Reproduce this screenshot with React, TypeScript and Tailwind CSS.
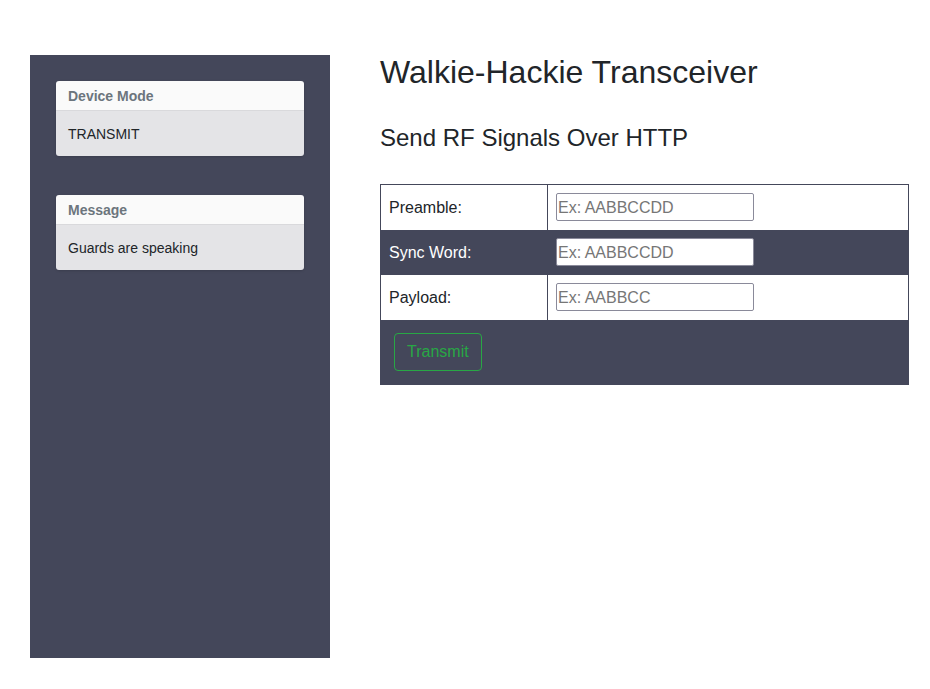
const fields = [
  { label: "Preamble:", placeholder: "Ex: AABBCCDD", dark: false },
  { label: "Sync Word:", placeholder: "Ex: AABBCCDD", dark: true },
  { label: "Payload:", placeholder: "Ex: AABBCC", dark: false },
];

const InfoCard = ({ title, value }: { title: string; value: string }) => (
  <div className="rounded-[3px] overflow-hidden shadow-sm">
    <div className="h-[30px] bg-[#fafafa] border-b border-[#d9d9dc] px-3 flex items-center text-sm font-bold text-[#6c757d]">
      {title}
    </div>
    <div className="h-[45px] bg-[#e4e4e7] px-3 flex items-center text-sm text-[#212529]">
      {value}
    </div>
  </div>
);

export default function App() {
  return (
    <div className="min-h-[689px] bg-white flex pl-[30px] pt-[55px] font-['Liberation_Sans',Arial,sans-serif] text-[#212529]">
      <aside className="w-[300px] h-[603px] bg-[#44475a] p-[26px] flex flex-col gap-[39px]">
        <InfoCard title="Device Mode" value="TRANSMIT" />
        <InfoCard title="Message" value="Guards are speaking" />
      </aside>
      <main className="ml-[50px] w-[529px]">
        <h1 className="text-[32px] leading-[34px]">Walkie-Hackie Transceiver</h1>
        <h2 className="mt-[34px] text-[24px] leading-[29px]">Send RF Signals Over HTTP</h2>
        <table className="mt-[32px] w-[529px] border border-[#44475a] border-collapse">
          <tbody>
            {fields.map((f) => (
              <tr key={f.label} className={f.dark ? "bg-[#44475a] text-white" : "bg-white"}>
                <td className="w-[167px] h-[45px] px-2 pt-[2px] border-r border-[#44475a] text-base">{f.label}</td>
                <td className="px-2 h-[45px]">
                  <input
                    type="text"
                    placeholder={f.placeholder}
                    className="w-[198px] h-[28px] px-[1px] pt-[1px] bg-white border border-[#8a8a9a] rounded-[2px] text-base placeholder:text-[#767676] outline-none"
                  />
                </td>
              </tr>
            ))}
            <tr className="bg-[#44475a]">
              <td colSpan={2} className="h-[65px] px-[13px]">
                <button className="h-[38px] px-3 pt-[1px] border border-[#28a745] rounded text-base text-[#28a745]">
                  Transmit
                </button>
              </td>
            </tr>
          </tbody>
        </table>
      </main>
    </div>
  );
}
